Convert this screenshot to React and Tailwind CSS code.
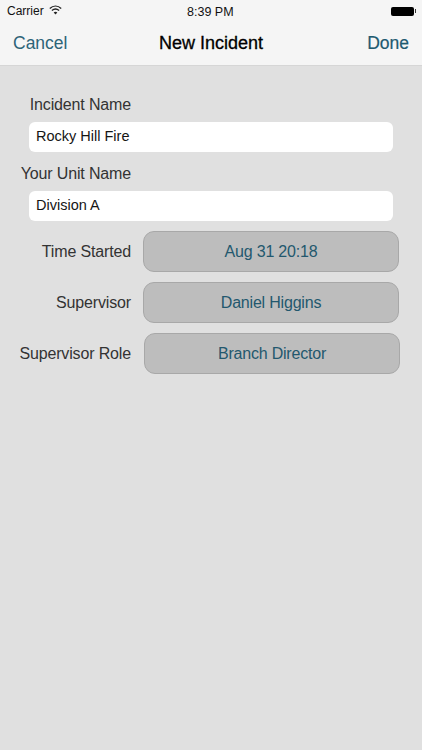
import React from 'react';

const SANS = "font-['Liberation_Sans',sans-serif]";

const StatusBar = () => (
  <div className="relative flex h-[21px] items-center justify-between pl-[7px] pr-[6px] pt-[1px] text-[12px] text-[#111]">
    <div className="flex items-center gap-[5px]">
      <span>Carrier</span>
      <svg className="mb-[2px]" width="13" height="10" viewBox="0 0 13 10" fill="none" stroke="#222" strokeWidth="1.4">
        <path d="M0.8 3.4C4.2 0.3 8.8 0.3 12.2 3.4" />
        <path d="M2.9 5.5C5 3.7 8 3.7 10.1 5.5" />
        <path d="M6.5 9.6L4.7 7.4C5.7 6.6 7.3 6.6 8.3 7.4Z" fill="#222" stroke="none" />
      </svg>
    </div>
    <span className="absolute left-[187px] top-[3px] text-[12.5px] font-medium">8:39 PM</span>
    <div className="flex items-center gap-[1px]">
      <div className="h-[9px] w-[23px] rounded-[2px] bg-black" />
      <div className="h-[4px] w-[1px] bg-[#333]" />
    </div>
  </div>
);

const NavBar = () => (
  <div className="relative flex h-[45px] items-center justify-between border-b border-[#d6d6d6] px-[13px] text-[17.5px]">
    <span className="text-[#2d6478]">Cancel</span>
    <span className="absolute inset-x-0 text-center text-[18px] font-medium text-black [-webkit-text-stroke:0.3px_black]">New Incident</span>
    <span className="text-[#1e5a70] [-webkit-text-stroke:0.2px_#1e5a70]">Done</span>
  </div>
);

const TextRow = ({ label, value, top, gap }) => (
  <div className={top}>
    <div className="flex h-[20px] w-[131px] items-center justify-end text-[16px] tracking-[-0.15px] text-[#333]">{label}</div>
    <div className={`ml-[29px] flex h-[30px] w-[364px] items-center rounded-[6px] bg-white pl-[7px] text-[14.5px] text-[#151515] ${gap}`}>
      {value}
    </div>
  </div>
);

const PickerRow = ({ label, value, shift, top }) => (
  <div className={`flex items-center ${top}`}>
    <div className="w-[131px] text-right text-[16px] tracking-[-0.15px] text-[#333]">{label}</div>
    <button className={`flex h-[41px] w-[256px] items-center justify-center rounded-[11px] border border-[#a8a8a8] bg-[#bdbdbd] text-[16px] tracking-[-0.2px] text-[#23586e] ${shift}`}>
      {value}
    </button>
  </div>
);

const App = () => {
  return (
    <div className={`${SANS} flex h-[750px] w-[422px] flex-col overflow-hidden bg-[#e0e0e0]`}>
      <div className="bg-[#f5f5f5]">
        <StatusBar />
        <NavBar />
      </div>
      <div className="pt-[29px]">
        <TextRow label="Incident Name" value="Rocky Hill Fire" top="" gap="mt-[7px]" />
        <TextRow label="Your Unit Name" value="Division A" top="mt-[12px]" gap="mt-[7px]" />
        <PickerRow label="Time Started" value="Aug 31 20:18" shift="ml-[12px]" top="mt-[10px]" />
        <PickerRow label="Supervisor" value="Daniel Higgins" shift="ml-[12px]" top="mt-[10px]" />
        <PickerRow label="Supervisor Role" value="Branch Director" shift="ml-[13px]" top="mt-[10px]" />
      </div>
    </div>
  );
};

export default App;
